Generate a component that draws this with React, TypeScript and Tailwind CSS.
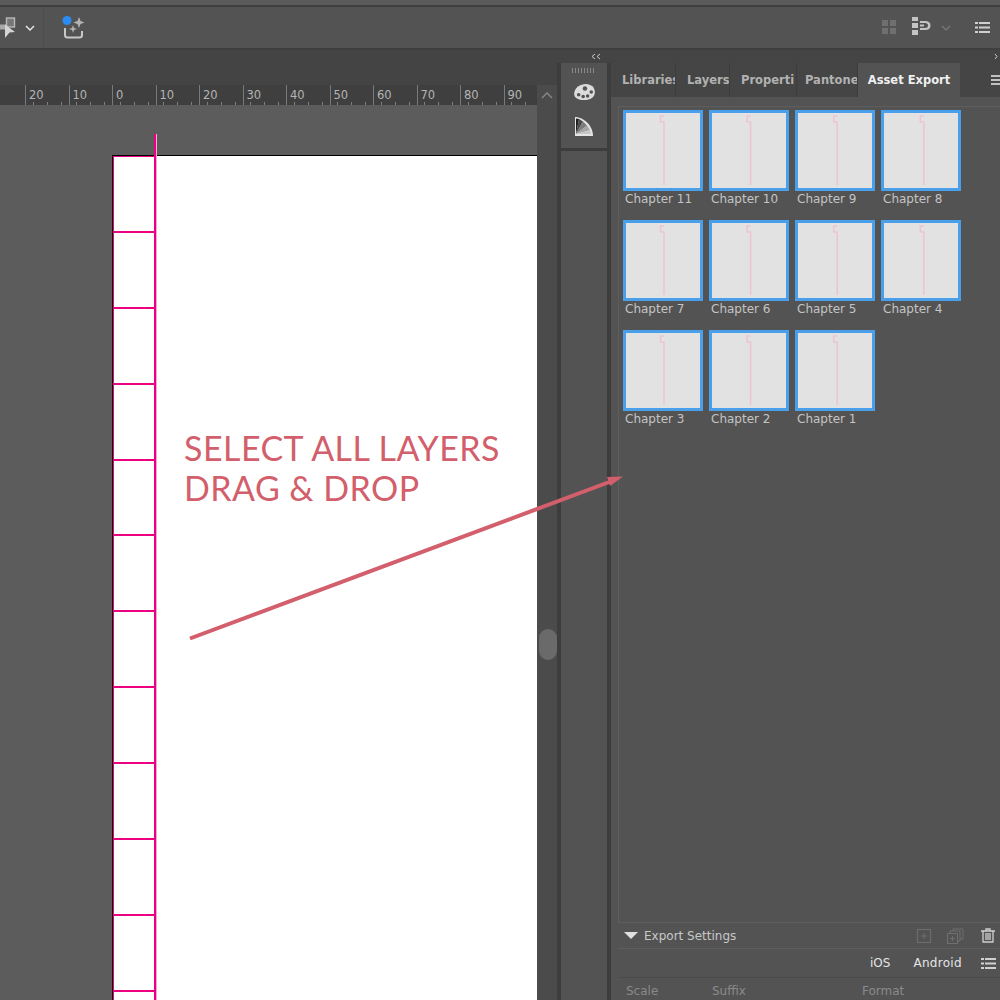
const chapters = [
  ['Chapter 11', 'Chapter 10', 'Chapter 9', 'Chapter 8'],
  ['Chapter 7', 'Chapter 6', 'Chapter 5', 'Chapter 4'],
  ['Chapter 3', 'Chapter 2', 'Chapter 1'],
];

const rulerLabels = ['20', '10', '0', '10', '20', '30', '40', '50', '60', '70', '80', '90'];
const guideRows = Array.from({ length: 12 }, (_, i) => i);

const tabs = [
  { label: 'Libraries', width: 'w-[65px]', inset: 'pl-[11px] pr-[1px]' },
  { label: 'Layers', width: 'w-[54px]', inset: 'pl-[11px]' },
  { label: 'Properti', width: 'w-[67px]', inset: 'pl-[11px]' },
  { label: 'Pantone', width: 'w-[61px]', inset: 'pl-[8px]' },
];

function Thumb({ name, col }: { name: string; col: number }) {
  const x = 38 + col * 0.6;
  return (
    <div className="w-[80px] shrink-0">
      <div className="h-[81px] border-[3px] border-[#4a9fea] bg-[#e2e2e2]">
        <svg width="74" height="75" viewBox="0 0 74 75" fill="none" className="block">
          <path d={`M${x} 3H${x - 3.5}V9H${x}V72`} stroke="#edc3d5" strokeWidth="1.5" />
        </svg>
      </div>
      <div className="mt-[1px] pl-[2px] text-[12px] leading-[15px] text-[#c4c4c4] whitespace-nowrap">{name}</div>
    </div>
  );
}

function RulerCell({ label }: { label: string }) {
  return (
    <div className="relative h-full w-[43.5px] shrink-0 border-l border-[#7a7a7a] pl-[3px] pt-[2px] text-[11.5px] leading-[16px] text-[#b4b4b4]">
      {label}
      <div className="absolute bottom-0 left-0 flex w-full justify-around">
        <span className="h-[3px] w-px bg-[#808080]" />
        <span className="h-[3px] w-px bg-[#808080]" />
        <span className="h-[3px] w-px bg-[#808080]" />
      </div>
    </div>
  );
}

function ListIcon({ className }: { className?: string }) {
  return (
    <svg width="15" height="13" viewBox="0 0 15 13" className={className} fill="#d0d0d0">
      <rect x="0" y="1" width="3" height="2" />
      <rect x="4" y="1" width="11" height="2" />
      <rect x="0" y="5.500" width="3" height="2" />
      <rect x="4" y="5.500" width="11" height="2" />
      <rect x="0" y="10" width="3" height="2" />
      <rect x="4" y="10" width="11" height="2" />
    </svg>
  );
}

export default function App() {
  return (
    <div
      className="relative flex h-[1000px] w-[1000px] flex-col overflow-hidden bg-[#535353]"
      style={{ fontFamily: '"DejaVu Sans", sans-serif' }}
    >
      {/* app chrome */}
      <div className="h-[5px] bg-[#5a5a5a]" />
      <div className="h-[2px] bg-[#3f3f3f]" />
      <div className="flex h-[41px] items-center bg-[#535353]">
        <div className="flex h-full w-[44px] items-center border-r border-[#4c4c4c]">
          <svg width="16" height="22" viewBox="0 0 16 22">
            <rect x="0" y="7.500" width="6" height="5" fill="#a8a8a8" />
            <rect x="6.500" y="1" width="8" height="9" fill="#777" stroke="#b8b8b8" strokeWidth="1.400" />
            <path d="M5 7.500L15 15L9.500 15.500L5 21Z" fill="#d4d4d4" />
          </svg>
          <svg width="10" height="6" viewBox="0 0 10 6" className="ml-[9px]" fill="none">
            <path d="M1 1L5 5L9 1" stroke="#e4e4e4" strokeWidth="1.500" />
          </svg>
        </div>
        <svg width="24" height="24" viewBox="0 0 24 24" className="ml-[18px]" fill="none">
          <path d="M3 12V19Q3 21.500 5.500 21.500H17.500Q20 21.500 20 19V15" stroke="#c8c8c8" strokeWidth="2" />
          <path d="M17 1L18.500 5L22.500 6.500L18.500 8L17 12L15.500 8L11.500 6.500L15.500 5Z" fill="#b4b4b4" />
          <path d="M11 9L12 12L15 13L12 14L11 17L10 14L7 13L10 12Z" fill="#b4b4b4" />
          <circle cx="5" cy="4.500" r="4.500" fill="#2b8cf2" />
        </svg>
        <div className="ml-auto flex items-center">
          <svg width="16" height="16" viewBox="0 0 16 16" className="mb-[2px]" fill="#6f6f6f">
            <rect x="1" y="1" width="6" height="6" />
            <rect x="9" y="1" width="6" height="6" />
            <rect x="1" y="9" width="6" height="6" />
            <rect x="9" y="9" width="6" height="6" />
          </svg>
          <svg width="19" height="19" viewBox="0 0 19 19" className="mb-[2px] ml-[15px]" fill="#c4c4c4">
            <rect x="0" y="0" width="6" height="4" />
            <rect x="0" y="6" width="6" height="5" />
            <rect x="0" y="13" width="6" height="5" />
            <path d="M8 4H13Q18.500 4 18.500 8.500Q18.500 13 13 13H8V11H13Q16 11 16 8.500Q16 6 13 6H8Z" />
            <rect x="8" y="7.500" width="4" height="2" />
          </svg>
          <svg width="10" height="6" viewBox="0 0 10 6" className="ml-[10px]" fill="none">
            <path d="M1 1L5 5L9 1" stroke="#7c7c7c" strokeWidth="1.200" />
          </svg>
          <ListIcon className="ml-[24px] mr-[10px]" />
        </div>
      </div>
      <div className="h-[2px] bg-[#3f3f3f]" />

      <div className="flex min-h-0 flex-1">
        {/* document area */}
        <div className="flex w-[557px] shrink-0 flex-col">
          <div className="h-[35px] bg-[#444444]" />
          <div className="flex min-h-0 flex-1">
            <div className="flex w-[537px] shrink-0 flex-col">
              <div className="flex h-[20px] overflow-hidden bg-[#3f3f3f] pl-[25px]">
                {rulerLabels.map((label, i) => (
                  <RulerCell key={i} label={label} />
                ))}
              </div>
              <div className="min-h-0 flex-1 bg-[#5c5c5c] pl-[112px] pt-[50px]">
                <div className="relative h-[900px] border-l border-t border-black bg-white">
                  <div className="absolute left-[41px] top-[-22px] h-[900px] w-[3px] border-r border-[#f9a8cf] bg-[#ec0080]" />
                  <div className="w-[43px] border-l border-t border-[#ec0080]">
                    {guideRows.map((i) => (
                      <div key={i} className="h-[75.900px] border-b-2 border-[#ec0080]" />
                    ))}
                  </div>
                  <div
                    className="absolute left-[71px] top-[272px] text-[34px] leading-[40px] font-normal tracking-[0.45px] text-[#d25f6b] whitespace-nowrap"
                    style={{ fontFamily: 'Lato, sans-serif' }}
                  >
                    <div>SELECT ALL LAYERS</div>
                    <div>DRAG &amp; DROP</div>
                  </div>
                </div>
              </div>
            </div>
            <div className="flex w-[20px] shrink-0 flex-col items-center bg-[#4b4b4b]">
              <svg width="12" height="7" viewBox="0 0 12 7" className="mt-[7px]" fill="none">
                <path d="M1 6L6 1L11 6" stroke="#8a8a8a" strokeWidth="1.300" />
              </svg>
              <div className="ml-[2px] mt-[530px] h-[31px] w-[18px] rounded-[9px] bg-[#6a6a6a]" />
            </div>
          </div>
        </div>

        {/* panels */}
        <div className="flex min-w-0 flex-1 flex-col bg-[#3d3d3d]">
          <div className="flex h-[13px] items-center bg-[#444444] pl-[34px] pr-[2px] text-[#c4c4c4]">
            <svg width="10" height="7" viewBox="0 0 10 7" fill="none">
              <path d="M4 1L1 3.500L4 6M9 1L6 3.500L9 6" stroke="#c8c8c8" />
            </svg>
            <svg width="4" height="7" viewBox="0 0 4 7" className="ml-auto" fill="none">
              <path d="M1 1L3 3.500L1 6" stroke="#c8c8c8" />
            </svg>
          </div>
          <div className="flex min-h-0 flex-1">
            <div className="ml-[4px] w-[46px] shrink-0">
              <div className="flex h-[85px] flex-col items-center bg-[#535353]">
                <div className="mt-[5px] h-[5px] w-[24px] bg-[repeating-linear-gradient(90deg,#8a8a8a_0,#8a8a8a_1px,transparent_1px,transparent_3px)]" />
                <svg width="23" height="18" viewBox="0 0 25 20" className="mt-[10px]">
                  <path d="M1 12C1 5 8 1 14 1C20 1 24 5 24 10C24 16 19 19 12 19C6 19 1 17 1 12Z" fill="#dcdcdc" />
                  <circle cx="6" cy="13" r="2" fill="#535353" />
                  <circle cx="11" cy="15" r="2" fill="#535353" />
                  <circle cx="16" cy="14.500" r="2" fill="#535353" />
                  <circle cx="20" cy="10" r="2" fill="#535353" />
                  <circle cx="13" cy="6" r="2.500" fill="#535353" />
                </svg>
                <svg width="20" height="21" viewBox="0 0 20 21" className="mt-[15px]">
                  <path d="M1 1C10 1 19 10 19 20H1Z" fill="#e4e4e4" />
                  <path d="M2 2.500L2 18L5 3Z" fill="#1f1f1f" />
                  <path d="M5 3L2 18L9 5.500Z" fill="#4a4a4a" />
                  <path d="M9 5.500L2 18L13 9.500Z" fill="#7a7a7a" />
                  <path d="M13 9.500L2 18L16 14Z" fill="#a4a4a4" />
                  <path d="M16 14L2 18H17Z" fill="#c8c8c8" />
                </svg>
              </div>
              <div className="mt-[3px] h-full bg-[#535353]" />
            </div>
            <div className="ml-[4px] flex min-w-0 flex-1 flex-col bg-[#535353]">
              {/* tabs */}
              <div className="flex h-[34px] shrink-0 bg-[#454545]">
                {tabs.map((tab) => (
                  <div
                    key={tab.label}
                    className={`${tab.width} ${tab.inset} flex shrink-0 items-center overflow-hidden border-r border-[#3d3d3d] pt-[2px] text-[11.500px] font-bold whitespace-nowrap text-[#b2b2b2]`}
                  >
                    {tab.label}
                  </div>
                ))}
                <div className="flex w-[102px] shrink-0 items-center justify-center bg-[#535353] pt-[2px] text-[11.500px] font-bold whitespace-nowrap text-[#f0f0f0]">
                  Asset Export
                </div>
                <div className="ml-auto flex items-center">
                  <div className="h-[10px] w-[9px] border-y-2 border-[#c0c0c0] py-[2px]">
                    <div className="h-[2px] bg-[#c0c0c0]" />
                  </div>
                </div>
              </div>

              <div className="flex min-h-0 flex-1 flex-col pl-[7px]">
                <div className="mt-[9px] flex min-h-0 flex-1 flex-col gap-[13px] border-l border-t border-[#5e5e5e] pl-[4px] pt-[3px]">
                  {chapters.map((row, r) => (
                    <div key={r} className="flex gap-[6px]">
                      {row.map((name, c) => (
                        <Thumb key={name} name={name} col={c} />
                      ))}
                    </div>
                  ))}
                </div>
                <div className="flex h-[27px] shrink-0 items-center border-y border-[#5e5e5e] pl-[6px] text-[12px] text-[#c8c8c8]">
                  <svg width="14" height="7" viewBox="0 0 14 7" fill="#e0e0e0">
                    <path d="M0 0H14L7 7Z" />
                  </svg>
                  <span className="ml-[6px]">Export Settings</span>
                  <div className="ml-auto flex items-center">
                    <svg width="14" height="14" viewBox="0 0 14 14" fill="none" stroke="#6f6f6f">
                      <rect x="0.500" y="0.500" width="13" height="13" />
                      <path d="M7 4V10M4 7H10" />
                    </svg>
                    <svg width="17" height="16" viewBox="0 0 17 16" className="ml-[16px]" fill="none" stroke="#6f6f6f">
                      <rect x="0.500" y="5.500" width="10" height="10" />
                      <path d="M3 5V3H13V13H11M6 3V1H16V11H13" />
                      <path d="M5.500 8V13M3 10.500H8" />
                    </svg>
                    <svg width="14" height="15" viewBox="0 0 14 15" className="ml-[17px] mr-[5px]" fill="none" stroke="#d0d0d0" strokeWidth="1.300">
                      <path d="M0 3H14M5 3V1H9V3M2 3V14H12V3M5 5V12M7 5V12M9 5V12" />
                    </svg>
                  </div>
                </div>
                <div className="flex h-[29px] shrink-0 items-center border-b border-[#4b4b4b] text-[12px] text-[#e4e4e4]">
                  <span className="ml-[252px]">iOS</span>
                  <span className="ml-[23px] tracking-[0.3px]">Android</span>
                  <ListIcon className="ml-[19px]" />
                </div>
                <div className="flex h-[22px] shrink-0 items-center pt-[4px] text-[12px] text-[#8a8a8a]">
                  <span className="ml-[8px] w-[86px]">Scale</span>
                  <span className="w-[150px]">Suffix</span>
                  <span>Format</span>
                </div>
              </div>
            </div>
          </div>
        </div>
      </div>

      {/* annotation arrow over both panes */}
      <svg width="1000" height="1000" viewBox="0 0 1000 1000" className="absolute left-0 top-0" fill="none">
        <path d="M190 638.500L612 481" stroke="#d25f6b" strokeWidth="4" />
        <path d="M623 476.500L607 477L610 486Z" fill="#d25f6b" />
      </svg>
    </div>
  );
}
